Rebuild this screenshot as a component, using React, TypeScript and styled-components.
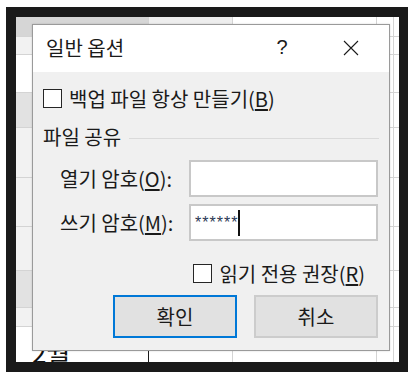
import React from 'react';
import styled, { createGlobalStyle } from 'styled-components';

const GlobalStyle = createGlobalStyle`
    html, body {
        margin: 0;
        padding: 0;
        background: #ffffff;
    }
    body {
        font-family: 'Noto Sans CJK KR', 'Noto Sans', sans-serif;
        color: #1a1a1a;
    }
`;

const Screen = styled.div`
    width: 408px;
    height: 374px;
    padding: 7px 0 2px 6px;
    box-sizing: border-box;
    overflow: hidden;
`;

const Frame = styled.div`
    background: #1a1a1a;
    height: 365px;
    padding: 10px 9px 10px 10px;
    box-sizing: border-box;
`;

const Sheet = styled.div`
    position: relative;
    height: 100%;
    background: #ffffff;
    display: flex;
    flex-direction: column;
    overflow: hidden;
`;

const Row = styled.div<{ $h: number }>`
    display: flex;
    height: ${(p) => p.$h}px;
    flex-shrink: 0;
    border-bottom: 1px solid #d4d4d4;
    box-sizing: border-box;
`;

const Cell = styled.div<{ $w: number; $bg?: string; $dark?: boolean }>`
    width: ${(p) => p.$w}px;
    flex-shrink: 0;
    background: ${(p) => p.$bg || '#ffffff'};
    border-right: 1px solid ${(p) => (p.$dark ? '#1a1a1a' : '#d4d4d4')};
    box-sizing: border-box;
    font-size: 26px;
    line-height: 1;
    padding: 12px 0 0 16px;
    overflow: hidden;
    color: #111;
`;

// column widths of the sheet behind the dialog
const cols = [133, 84, 144, 14, 8];

const rows: { h: number; a: string; b?: string; text?: string }[] = [
    { h: 20, a: '#d6d6d6', b: '#eeeeee' },
    { h: 18, a: '#f2f2f2' },
    { h: 38, a: '#ffffff' },
    { h: 35, a: '#e2e2e2' },
    { h: 50, a: '#f2f2f2' },
    { h: 49, a: '#f2f2f2' },
    { h: 44, a: '#f2f2f2' },
    { h: 37, a: '#e2e2e2' },
    { h: 19, a: '#f2f2f2' },
    { h: 36, a: '#ffffff', text: '2월' }
];

const Dialog = styled.div`
    position: absolute;
    left: 16px;
    top: 7px;
    width: 358px;
    height: 327px;
    border: 1px solid #9a9a9a;
    box-sizing: border-box;
    background: #f0f0f0;
    display: flex;
    flex-direction: column;
    box-shadow: 0 0 2px rgba(0, 0, 0, 0.15);
`;

const TitleBar = styled.div`
    height: 47px;
    background: #ffffff;
    display: flex;
    align-items: center;
    padding: 0 0 2px 13px;
    box-sizing: border-box;
    font-size: 20px;
`;

const Title = styled.div`
    flex: 1;
`;

const Help = styled.div`
    width: 20px;
    margin-right: 51px;
    font-family: 'Liberation Sans', sans-serif;
    font-size: 20px;
    text-align: center;
`;

const CloseButton = styled.div`
    width: 16px;
    height: 16px;
    margin-right: 30px;
    display: flex;
`;

const Body = styled.div`
    flex: 1;
    display: flex;
    flex-direction: column;
    padding: 16px 10px 0 10px;
    font-size: 20px;
`;

const CheckRow = styled.label<{ $right?: boolean; $top?: number }>`
    display: flex;
    align-items: center;
    gap: 7px;
    height: 20px;
    align-self: ${(p) => (p.$right ? 'flex-end' : 'flex-start')};
    margin-right: ${(p) => (p.$right ? '14px' : '0')};
    margin-top: ${(p) => p.$top || 0}px;
`;

const Box = styled.span`
    width: 19px;
    height: 19px;
    border: 1px solid #262626;
    background: #ffffff;
    box-sizing: border-box;
    flex-shrink: 0;
`;

const Key = styled.span`
    text-decoration: underline;
    text-underline-offset: 2px;
`;

const GroupHead = styled.div`
    display: flex;
    align-items: center;
    gap: 8px;
    margin-top: 17px;
    height: 22px;
`;

const GroupLine = styled.div`
    flex: 1;
    height: 1px;
    background: #dadada;
    margin-top: 4px;
`;

const FieldRow = styled.div<{ $top: number }>`
    display: flex;
    align-items: center;
    margin-top: ${(p) => p.$top}px;
    padding-left: 17px;
`;

const FieldLabel = styled.div`
    flex: 1;
`;

const Input = styled.div`
    width: 189px;
    height: 37px;
    border: 2px solid #c8c8c8;
    background: #ffffff;
    box-sizing: border-box;
    margin-right: 1px;
    display: flex;
    align-items: center;
    padding-left: 4px;
    font-family: 'Liberation Sans', sans-serif;
    font-size: 16px;
    letter-spacing: 1px;
    color: #2b3a55;
`;

const Caret = styled.span`
    width: 2px;
    height: 26px;
    background: #111;
    margin-left: 0;
`;

const Buttons = styled.div`
    display: flex;
    justify-content: flex-end;
    gap: 17px;
    margin-top: 12px;
    margin-right: 1px;
`;

const Button = styled.div<{ $primary?: boolean }>`
    width: 124px;
    height: 43px;
    box-sizing: border-box;
    background: #e1e1e1;
    border: 2px solid ${(p) => (p.$primary ? '#0078d7' : '#cccccc')};
    display: flex;
    align-items: center;
    justify-content: center;
    font-size: 20px;
`;

export default function App() {
    return (
        <Screen>
            <GlobalStyle />
            <Frame>
                <Sheet>
                    {rows.map((r, i) => (
                        <Row key={i} $h={r.h}>
                            {cols.map((w, j) => (
                                <Cell
                                    key={j}
                                    $w={w}
                                    $dark={i === rows.length - 1 && j === 0}
                                    $bg={j === 0 ? r.a : j === 1 ? r.b : undefined}
                                >
                                    {j === 0 ? r.text : null}
                                </Cell>
                            ))}
                        </Row>
                    ))}
                    <Dialog>
                        <TitleBar>
                            <Title>일반 옵션</Title>
                            <Help>?</Help>
                            <CloseButton>
                                <svg width="16" height="16" viewBox="0 0 16 16">
                                    <path d="M1 1 L15 15 M15 1 L1 15" stroke="#1a1a1a" strokeWidth="1.1" fill="none" />
                                </svg>
                            </CloseButton>
                        </TitleBar>
                        <Body>
                            <CheckRow>
                                <Box />
                                <span>
                                    백업 파일 항상 만들기(<Key>B</Key>)
                                </span>
                            </CheckRow>
                            <GroupHead>
                                <span>파일 공유</span>
                                <GroupLine />
                            </GroupHead>
                            <FieldRow $top={13}>
                                <FieldLabel>
                                    열기 암호(<Key>O</Key>):
                                </FieldLabel>
                                <Input />
                            </FieldRow>
                            <FieldRow $top={7}>
                                <FieldLabel>
                                    쓰기 암호(<Key>M</Key>):
                                </FieldLabel>
                                <Input>
                                    ******
                                    <Caret />
                                </Input>
                            </FieldRow>
                            <CheckRow $right $top={22}>
                                <Box />
                                <span>
                                    읽기 전용 권장(<Key>R</Key>)
                                </span>
                            </CheckRow>
                            <Buttons>
                                <Button $primary>확인</Button>
                                <Button>취소</Button>
                            </Buttons>
                        </Body>
                    </Dialog>
                </Sheet>
            </Frame>
        </Screen>
    );
}
